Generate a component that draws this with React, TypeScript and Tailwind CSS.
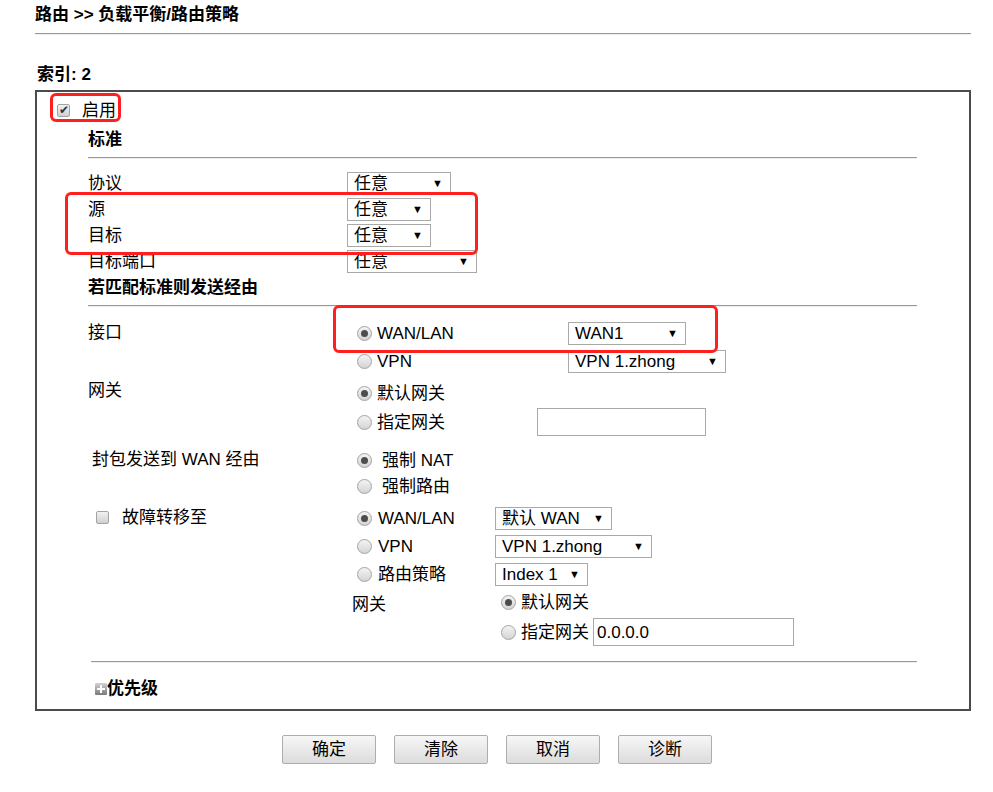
import React from "react";

const font = { fontFamily: '"Liberation Sans", "Noto Sans CJK SC", sans-serif' };

const Sel = ({ w, text }: { w: string; text: string }) => (
    <div className={`${w} h-[23px] border border-[#a9a9a9] bg-white flex items-center justify-between pl-[6px] pr-[7px] text-[17px] leading-none`}>
        <span>{text}</span>
        <span className="text-[11px]">▼</span>
    </div>
);

const Radio = ({ on = false }: { on?: boolean }) => (
    <span className="w-[15px] h-[15px] shrink-0 rounded-full border border-[#a3a3a3] bg-gradient-to-b from-[#f4f4f4] to-[#d4d4d4] flex items-center justify-center">
        {on && <span className="w-[7px] h-[7px] rounded-full bg-[#4d4d4d]" />}
    </span>
);

const Check = ({ on = false }: { on?: boolean }) => (
    <span className="w-[13px] h-[13px] shrink-0 rounded-[2px] border border-[#a3a3a3] bg-gradient-to-b from-[#f2f2f2] to-[#d0d0d0] flex items-center justify-center text-[12px] leading-none text-[#333]">
        {on ? "✔" : ""}
    </span>
);

const Rule = ({ cls }: { cls: string }) => (
    <div className={`${cls} h-[2px] border-t border-[#999] bg-[#eee]`} />
);

const Btn = ({ text }: { text: string }) => (
    <button className="w-[94px] h-[29px] border border-[#adadad] rounded-[2px] bg-gradient-to-b from-[#f7f7f7] to-[#dcdcdc] text-[17px] text-black">
        {text}
    </button>
);

export default function App() {
    return (
        <div className="relative w-[993px] h-[792px] bg-white text-black" style={font}>
            <div className="ml-[35px] w-[936px]">
                <div className="h-[33px] pt-[4px] text-[17px] font-bold leading-[22px]">路由 &gt;&gt; 负载平衡/路由策略</div>
                <Rule cls="w-[936px]" />
                <div className="h-[55px] flex items-end pl-[2px] pb-[3px] text-[17px] font-bold">索引: 2</div>

                <div className="h-[621px] border-2 border-[#4b4b4b] text-[17px] leading-none">
                    <div className="h-[36px] flex items-center pl-[20px]">
                        <Check on />
                        <span className="ml-[12px]">启用</span>
                    </div>
                    <div className="pl-[51px]">
                        <div className="h-[22px] flex items-center font-bold">标准</div>
                        <Rule cls="mt-[7px] w-[829px]" />
                        <div className="mt-[11px]">
                            {[
                                ["协议", "w-[104px]"],
                                ["源", "w-[84px]"],
                                ["目标", "w-[84px]"],
                                ["目标端口", "w-[130px]"],
                            ].map(([l, w]) => (
                                <div key={l} className="h-[26px] flex items-center">
                                    <span className="w-[259px]">{l}</span>
                                    <Sel w={w} text="任意" />
                                </div>
                            ))}
                        </div>
                        <div className="h-[26px] flex items-center font-bold">若匹配标准则发送经由</div>
                        <Rule cls="mt-[5px] w-[829px]" />

                        <div className="mt-[12px] flex">
                            <span className="w-[269px] pt-[5px]">接口</span>
                            <div>
                                <div className="h-[28px] flex items-center">
                                    <Radio on />
                                    <span className="ml-[5px] w-[191px]">WAN/LAN</span>
                                    <Sel w="w-[118px]" text="WAN1" />
                                </div>
                                <div className="h-[28px] flex items-center">
                                    <Radio />
                                    <span className="ml-[5px] w-[191px]">VPN</span>
                                    <Sel w="w-[158px]" text="VPN 1.zhong" />
                                </div>
                            </div>
                        </div>

                        <div className="mt-[4px] flex">
                            <span className="w-[269px] pt-[3px]">网关</span>
                            <div>
                                <div className="h-[28px] flex items-center">
                                    <Radio on />
                                    <span className="ml-[5px]">默认网关</span>
                                </div>
                                <div className="h-[30px] flex items-center">
                                    <Radio />
                                    <span className="ml-[5px] w-[160px]">指定网关</span>
                                    <div className="w-[169px] h-[28px] border border-[#a9a9a9]" />
                                </div>
                            </div>
                        </div>

                        <div className="mt-[10px] flex">
                            <span className="w-[265px] ml-[4px] pt-[4px]">封包发送到 WAN 经由</span>
                            <div>
                                <div className="h-[26px] flex items-center">
                                    <Radio on />
                                    <span className="ml-[10px]">强制 NAT</span>
                                </div>
                                <div className="h-[26px] flex items-center">
                                    <Radio />
                                    <span className="ml-[10px]">强制路由</span>
                                </div>
                            </div>
                        </div>

                        <div className="mt-[5px] flex">
                            <div className="w-[261px] ml-[8px] h-[26px] flex items-center">
                                <Check />
                                <span className="ml-[13px]">故障转移至</span>
                            </div>
                            <div>
                                {[
                                    ["WAN/LAN", "w-[117px]", "默认 WAN", true],
                                    ["VPN", "w-[157px]", "VPN 1.zhong", false],
                                    ["路由策略", "w-[93px]", "Index 1", false],
                                ].map(([l, w, t, on]) => (
                                    <div key={l as string} className="h-[28px] flex items-center">
                                        <Radio on={on as boolean} />
                                        <span className="ml-[6px] w-[117px]">{l as string}</span>
                                        <Sel w={w as string} text={t as string} />
                                    </div>
                                ))}
                            </div>
                        </div>
                        <div className="flex">
                            <span className="ml-[264px] w-[149px] pt-[8px]">网关</span>
                            <div>
                                <div className="h-[29px] flex items-center">
                                    <Radio on />
                                    <span className="ml-[5px]">默认网关</span>
                                </div>
                                <div className="h-[30px] flex items-center">
                                    <Radio />
                                    <span className="ml-[5px] mr-[4px]">指定网关</span>
                                    <div className="w-[201px] h-[28px] border border-[#a9a9a9] flex items-center pl-[3px]">0.0.0.0</div>
                                </div>
                            </div>
                        </div>
                    </div>
                    <Rule cls="mt-[14px] ml-[54px] w-[826px]" />
                    <div className="mt-[17px] ml-[58px] flex items-center">
                        <span className="w-[12px] h-[12px] rounded-[1px] bg-gradient-to-b from-[#d4d4d4] to-[#7a7a7a] relative">
                            <span className="absolute left-[2px] top-[5px] w-[8px] h-[2px] bg-white" />
                            <span className="absolute left-[5px] top-[2px] w-[2px] h-[8px] bg-white" />
                        </span>
                        <span className="font-bold">优先级</span>
                    </div>
                </div>

                <div className="mt-[24px] ml-[247px] flex gap-[18px]">
                    <Btn text="确定" />
                    <Btn text="清除" />
                    <Btn text="取消" />
                    <Btn text="诊断" />
                </div>
            </div>

            <div className="absolute left-[50px] top-[93px] w-[71px] h-[29px] border-[3px] border-[#ff1f1f] rounded-[6px]" />
            <div className="absolute left-[65px] top-[192px] w-[413px] h-[63px] border-[3px] border-[#ff1f1f] rounded-[6px]" />
            <div className="absolute left-[333px] top-[305px] w-[385px] h-[48px] border-[3px] border-[#ff1f1f] rounded-[6px]" />
        </div>
    );
}
